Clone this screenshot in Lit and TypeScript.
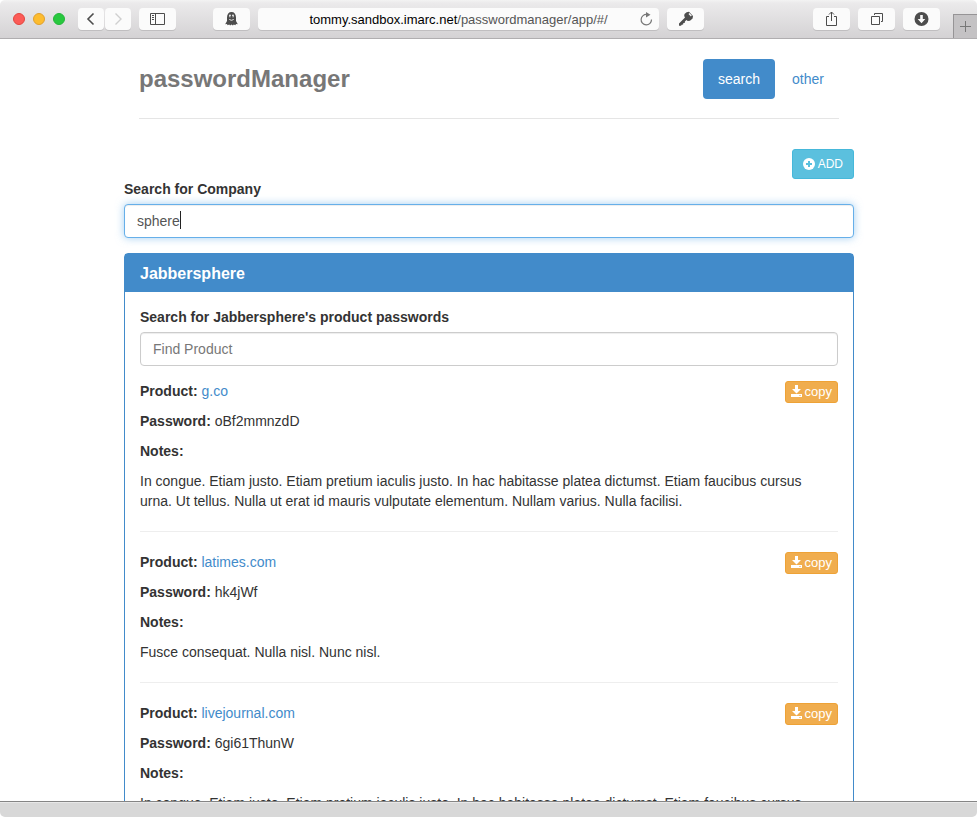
import { LitElement, html, css, svg } from "lit";
import { customElement, property, state } from "lit/decorators.js";

interface Product {
  name: string;
  password: string;
  notes: string;
}

const LONG_NOTES =
  "In congue. Etiam justo. Etiam pretium iaculis justo. In hac habitasse platea dictumst. Etiam faucibus cursus urna. Ut tellus. Nulla ut erat id mauris vulputate elementum. Nullam varius. Nulla facilisi.";

const PRODUCTS: Product[] = [
  { name: "g.co", password: "oBf2mmnzdD", notes: LONG_NOTES },
  { name: "latimes.com", password: "hk4jWf", notes: "Fusce consequat. Nulla nisl. Nunc nisl." },
  { name: "livejournal.com", password: "6gi61ThunW", notes: LONG_NOTES },
];

const line = (content: unknown, w = 17, h = 16) => html`
  <svg width=${w} height=${h} viewBox="0 0 ${w} ${h}" fill="none" stroke="currentColor" aria-hidden="true">${content}</svg>
`;

const icons = {
  back: line(svg`<path d="M10.500 2.500 5 8l5.500 5.500" stroke-width="1.600"/>`, 16),
  forward: line(svg`<path d="M5.500 2.500 11 8l-5.500 5.500" stroke-width="1.400"/>`, 16),
  sidebar: line(svg`<path d="M1.500 2.500h14v11h-14zM6.500 2.500v11M3 4.500h2M3 6.500h2M3 8.500h2"/>`),
  ghost: line(svg`
    <path fill="currentColor" stroke="none" d="M4 6.500C4 3 5.800 1 8.500 1S13 3 13 6.500V10l1.800 3.300-1.800-.3-.6 1.200-1.600-.8-.9 1-1.400-.9-1.400.9-.9-1-1.600.8L4 13l-1.800.3L4 10z"/>
    <ellipse cx="7" cy="5" rx=".9" ry="1.400" fill="#fafafa" stroke="none"/>
    <ellipse cx="10" cy="5" rx=".9" ry="1.400" fill="#fafafa" stroke="none"/>
    <circle cx="7.200" cy="5.400" r=".5" fill="#444" stroke="none"/><circle cx="9.800" cy="5.400" r=".5" fill="#444" stroke="none"/>
    <path d="M6.300 8c.8 1.700 3.600 1.700 4.400 0" stroke="#fafafa" stroke-width=".9"/>`),
  reload: line(svg`<path d="M9 3.500A5.200 5.200 0 1 0 13.500 8.500" stroke-width="1.200"/><path fill="currentColor" stroke="none" d="M8 1l4.500 2.800L8 6.500z"/>`),
  key: line(svg`
    <path fill="currentColor" stroke="none" fill-rule="evenodd" d="M9.600 1.300 12 .8l4 4.200-.4 2.600L13 9.800l-2.200.1-1.400-.9-1.500 1.600-.2 1.300-1.300.2-.3 1.300-1.400.3-.7 1H2v-2.300l6-6-.8-1.500.3-2zM11.500 3l2.400 2.400.9-.9-2.400-2.400z"/>`),
  share: line(svg`<path d="M6 5.500H3.500v9h10v-9H11M8.500 10V1M6 3.500 8.500 1 11 3.500"/>`),
  tabs: line(svg`<path d="M3.500 5.500h8v8h-8zM6.500 4V2.500h8v8H13"/>`),
  download: line(svg`<circle cx="8.500" cy="8" r="7" fill="currentColor" stroke="none"/><path fill="#fafafa" stroke="none" d="M7.200 4h2.600v4h2.500l-3.800 4.200L4.700 8h2.500z"/>`),
  plus: line(svg`<path d="M6.500 1v11M1 6.500h11"/>`, 13, 13),
  add: line(svg`<circle cx="6" cy="6" r="6" fill="currentColor" stroke="none"/><path d="M6 3v6M3 6h6" stroke="#5bc0de" stroke-width="2"/>`, 12, 12),
  save: line(svg`<path fill="currentColor" stroke="none" d="M4 0h3v4h3L5.500 8.500 1 4h3zM0 9h11v3H0z"/><path stroke="#f0ad4e" stroke-width=".6" d="M8 10.500h2"/>`, 11, 12),
};

const control = css`
  *,
  *::before,
  *::after {
    box-sizing: border-box;
  }
  button {
    font: inherit;
    margin: 0;
    cursor: pointer;
  }
  svg {
    display: block;
    flex: none;
  }
  a {
    color: #428bca;
    text-decoration: none;
  }
`;

@customElement("browser-toolbar")
class BrowserToolbar extends LitElement {
  static styles = [
    control,
    css`
      :host {
        box-sizing: border-box;
        flex: none;
        display: flex;
        align-items: flex-start;
        height: 39px;
        padding: 8px 0 0 13px;
        border-bottom: 1px solid #b0aeb0;
        border-radius: 5px 5px 0 0;
        background: linear-gradient(#f3f3f3, #ebeaeb 3px, #d4d2d4);
        color: #4d4d4d;
        font-size: 13px;
      }
      .group {
        display: flex;
        gap: 8px;
      }
      .lights {
        padding: 5px 0;
        margin-right: 13px;
      }
      .light {
        width: 12px;
        height: 12px;
        padding: 0;
        border: 1px solid #e2463f;
        border-radius: 50%;
        background: #fc5b57;
      }
      .light.minimise {
        border-color: #e0a02e;
        background: #fdbc2e;
      }
      .light.zoom {
        border-color: #24b53a;
        background: #28c83e;
      }
      .history {
        gap: 1px;
        margin-right: 8px;
      }
      .tool {
        display: flex;
        align-items: center;
        justify-content: center;
        width: 37px;
        height: 22px;
        padding: 0;
        border: 0;
        border-radius: 4px;
        background: #fbfbfb;
        box-shadow: 0 1px 0 #c0bec0;
        color: inherit;
      }
      .history .tool {
        width: 26px;
      }
      .tool:disabled {
        color: #cfcfcf;
      }
      .centre {
        flex: 1;
        margin: 0 109px 0 37px;
      }
      .address {
        flex: 1;
        display: flex;
        align-items: center;
        height: 22px;
        padding: 0 4px 0 21px;
        border-radius: 4px;
        background: #fbfbfb;
        box-shadow: 0 1px 0 #c0bec0;
      }
      .url,
      .reload {
        padding: 0;
        border: 0;
        background: none;
        color: #555;
      }
      .url {
        flex: 1;
        padding-top: 2px;
        white-space: nowrap;
      }
      .host {
        color: #000;
      }
      .reload {
        color: #777;
      }
      .tab {
        display: flex;
        align-items: center;
        justify-content: center;
        align-self: flex-end;
        width: 24px;
        height: 24px;
        margin-left: 13px;
        padding: 0;
        border: 1px solid #969496;
        border-width: 1px 0 0 1px;
        background: #c4c2c4;
        color: #777;
      }
    `,
  ];

  render() {
    return html`
      <div class="group lights">
        <button class="light" aria-label="Close"></button>
        <button class="light minimise" aria-label="Minimise"></button>
        <button class="light zoom" aria-label="Zoom"></button>
      </div>
      <div class="group history">
        <button class="tool" aria-label="Back">${icons.back}</button>
        <button class="tool" aria-label="Forward" disabled>${icons.forward}</button>
      </div>
      <button class="tool" aria-label="Sidebar">${icons.sidebar}</button>
      <div class="group centre">
        <button class="tool" aria-label="Trackers">${icons.ghost}</button>
        <div class="address">
          <button class="url"><span class="host">tommy.sandbox.imarc.net</span>/passwordmanager/app/#/</button>
          <button class="reload" aria-label="Reload">${icons.reload}</button>
        </div>
        <button class="tool" aria-label="Passwords">${icons.key}</button>
      </div>
      <div class="group">
        <button class="tool" aria-label="Share">${icons.share}</button>
        <button class="tool" aria-label="Tabs">${icons.tabs}</button>
        <button class="tool" aria-label="Downloads">${icons.download}</button>
      </div>
      <button class="tab" aria-label="New tab">${icons.plus}</button>
    `;
  }
}

@customElement("product-entry")
class ProductEntry extends LitElement {
  @property({ attribute: false }) product!: Product;

  static styles = [
    control,
    css`
      :host {
        display: block;
      }
      .top {
        display: flex;
        justify-content: space-between;
        align-items: flex-start;
        height: 20px;
        margin-bottom: 10px;
      }
      p {
        margin: 0 0 10px;
      }
      .copy {
        display: flex;
        align-items: center;
        gap: 3px;
        height: 22px;
        padding: 0 5px;
        border: 1px solid #eea236;
        border-radius: 3px;
        background: #f0ad4e;
        color: #fff;
        font-size: 13px;
        line-height: 18px;
      }
      .copy svg {
        margin-bottom: 2px;
      }
      .notes {
        margin: 0;
        padding-right: 10px;
      }
    `,
  ];

  render() {
    const { name, password, notes } = this.product;
    return html`
      <div class="top">
        <p><b>Product:</b> <a href="#">${name}</a></p>
        <button class="copy">${icons.save}copy</button>
      </div>
      <p><b>Password:</b> ${password}</p>
      <p><b>Notes:</b></p>
      <p class="notes">${notes}</p>
    `;
  }
}

@customElement("app-root")
class AppRoot extends LitElement {
  @state() private company = "sphere";

  static styles = [
    control,
    css`
      :host {
        display: flex;
        flex-direction: column;
        height: 100vh;
        overflow: hidden;
        background: #fff;
        color: #333;
        font: 14px/20px "Liberation Sans", Arial, sans-serif;
      }
      .page {
        flex: 1;
        min-height: 0;
        padding-left: 1px;
        overflow: hidden;
      }
      .container {
        max-width: 730px;
        margin: 0 auto;
      }
      .header {
        display: flex;
        align-items: center;
        justify-content: space-between;
        margin: 0 15px 30px;
        padding: 20px 0 19px;
        border-bottom: 1px solid #e5e5e5;
      }
      .brand {
        margin: 0;
        color: #777;
        font-size: 24px;
        line-height: 40px;
      }
      .nav {
        display: flex;
        gap: 2px;
      }
      .pill {
        padding: 10px 15px;
        border-radius: 4px;
      }
      .pill.active {
        background: #428bca;
        color: #fff;
      }
      .actions {
        display: flex;
        justify-content: flex-end;
      }
      .add {
        display: flex;
        align-items: center;
        gap: 3px;
        height: 30px;
        padding: 0 10px;
        border: 1px solid #46b8da;
        border-radius: 3px;
        background: #5bc0de;
        color: #fff;
        font-size: 12px;
      }
      .label {
        display: block;
        margin-bottom: 5px;
        font-weight: bold;
      }
      .field {
        position: relative;
        margin-bottom: 15px;
      }
      .input {
        display: block;
        width: 100%;
        height: 34px;
        padding: 6px 12px;
        border: 1px solid #ccc;
        border-radius: 4px;
        outline: 0;
        background: #fff;
        box-shadow: inset 0 1px 1px rgba(0, 0, 0, 0.075);
        color: #555;
        font: inherit;
      }
      .input::placeholder {
        color: #777;
      }
      .input.current {
        border-color: #66afe9;
        box-shadow: inset 0 1px 1px rgba(0, 0, 0, 0.075), 0 0 8px rgba(102, 175, 233, 0.6);
      }
      .caret {
        position: absolute;
        top: 7px;
        left: 13px;
        height: 18px;
        border-right: 1px solid #222;
        color: transparent;
        pointer-events: none;
      }
      .panel {
        border: 1px solid #428bca;
        border-radius: 4px;
      }
      .title {
        margin: 0;
        padding: 10px 15px 8px;
        background: #428bca;
        color: #fff;
        font-size: 16px;
        line-height: 20px;
      }
      .body {
        padding: 15px;
      }
      .rule {
        margin: 20px 0;
        border: 0;
        border-top: 1px solid #eee;
      }
      .status {
        flex: none;
        height: 16px;
        border-top: 1px solid #858585;
        border-radius: 0 0 5px 5px;
        background: #d8d8d8;
        box-shadow: inset 0 1px 0 #e8e8e8;
      }
    `,
  ];

  private onCompany(e: Event) {
    this.company = (e.target as HTMLInputElement).value;
  }

  render() {
    return html`
      <browser-toolbar></browser-toolbar>
      <main class="page">
        <div class="container">
          <header class="header">
            <h1 class="brand">passwordManager</h1>
            <nav class="nav">
              <a class="pill active" href="#">search</a>
              <a class="pill" href="#">other</a>
            </nav>
          </header>
          <div class="actions"><button class="add">${icons.add}ADD</button></div>
          <label class="label" for="company">Search for Company</label>
          <div class="field">
            <input class="input current" id="company" .value=${this.company} @input=${this.onCompany} />
            <span class="caret" aria-hidden="true">${this.company}</span>
          </div>
          <section class="panel">
            <h2 class="title">Jabbersphere</h2>
            <div class="body">
              <label class="label" for="product">Search for Jabbersphere's product passwords</label>
              <div class="field"><input class="input" id="product" placeholder="Find Product" /></div>
              ${PRODUCTS.map(
                (p, i) => html`${i ? html`<hr class="rule" />` : ""}<product-entry .product=${p}></product-entry>`
              )}
            </div>
          </section>
        </div>
      </main>
      <footer class="status"></footer>
    `;
  }
}
